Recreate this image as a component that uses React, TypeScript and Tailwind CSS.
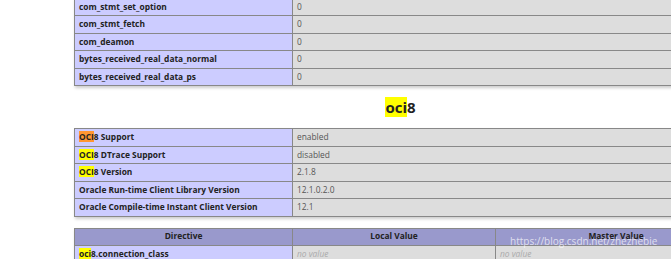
import React from "react";

const font = { fontFamily: '"Open Sans", "Noto Sans", Arial, sans-serif' };

function Hl({ children, orange }: { children: React.ReactNode; orange?: boolean }) {
  return <span className={orange ? "bg-[#ff9632]" : "bg-[#ffff00]"}>{children}</span>;
}

function Row({ k, v }: { k: React.ReactNode; v: React.ReactNode }) {
  return (
    <tr className="h-[17.5px]">
      <td className="w-[218px] border border-[#888] bg-[#ccccff] px-[4px] py-0 font-bold text-[#222] leading-none">
        {k}
      </td>
      <td className="border border-[#888] bg-[#dddddd] px-[4px] py-0 text-[#555] leading-none">{v}</td>
    </tr>
  );
}

export default function App() {
  return (
    <div className="relative w-[671px] h-[259px] overflow-hidden bg-white" style={font}>
      <div className="flex flex-col pl-[74px] text-[8.4px]">
        <table className="w-[663px] border-collapse mt-[-2.5px] shadow-[1px_2px_3px_#ccc]">
          <tbody>
            <Row k="com_stmt_set_option" v="0" />
            <Row k="com_stmt_fetch" v="0" />
            <Row k="com_deamon" v="0" />
            <Row k="bytes_received_real_data_normal" v="0" />
            <Row k="bytes_received_real_data_ps" v="0" />
          </tbody>
        </table>

        <h2 className="w-[663px] h-[42px] flex items-center justify-center pr-[10px] text-[15px] font-bold text-[#222]">
          <span>
            <Hl>oci</Hl>8
          </span>
        </h2>

        <table className="w-[663px] border-collapse shadow-[1px_2px_3px_#ccc]">
          <tbody>
            <Row
              k={
                <>
                  <Hl orange>OCI</Hl>8 Support
                </>
              }
              v="enabled"
            />
            <Row
              k={
                <>
                  <Hl>OCI</Hl>8 DTrace Support
                </>
              }
              v="disabled"
            />
            <Row
              k={
                <>
                  <Hl>OCI</Hl>8 Version
                </>
              }
              v="2.1.8"
            />
            <Row k="Oracle Run-time Client Library Version" v="12.1.0.2.0" />
            <Row k="Oracle Compile-time Instant Client Version" v="12.1" />
          </tbody>
        </table>

        <table className="w-[663px] border-collapse mt-[11px] shadow-[1px_2px_3px_#ccc]">
          <tbody>
            <tr className="h-[17px]">
              <th className="w-[218px] border border-[#888] bg-[#9999cc] font-bold text-[#222] text-center leading-none">
                Directive
              </th>
              <th className="w-[203px] border border-[#888] bg-[#9999cc] font-bold text-[#222] text-center leading-none">
                Local Value
              </th>
              <th className="border border-[#888] bg-[#9999cc] font-bold text-[#222] text-center leading-none">
                Master Value
              </th>
            </tr>
            <tr className="h-[17.5px]">
              <td className="border border-[#888] bg-[#ccccff] px-[4px] font-bold text-[#222] leading-none">
                <Hl>oci</Hl>8.connection_class
              </td>
              <td className="border border-[#888] bg-[#dddddd] px-[4px] leading-none">
                <i className="text-[#aaa]">no value</i>
              </td>
              <td className="border border-[#888] bg-[#dddddd] px-[4px] leading-none">
                <i className="text-[#aaa]">no value</i>
              </td>
            </tr>
          </tbody>
        </table>
      </div>

      <div className="absolute left-[510px] top-[236px] text-[10px] text-white/70 leading-none whitespace-nowrap">
        https://blog.csdn.net/zhezhebie
      </div>
    </div>
  );
}
